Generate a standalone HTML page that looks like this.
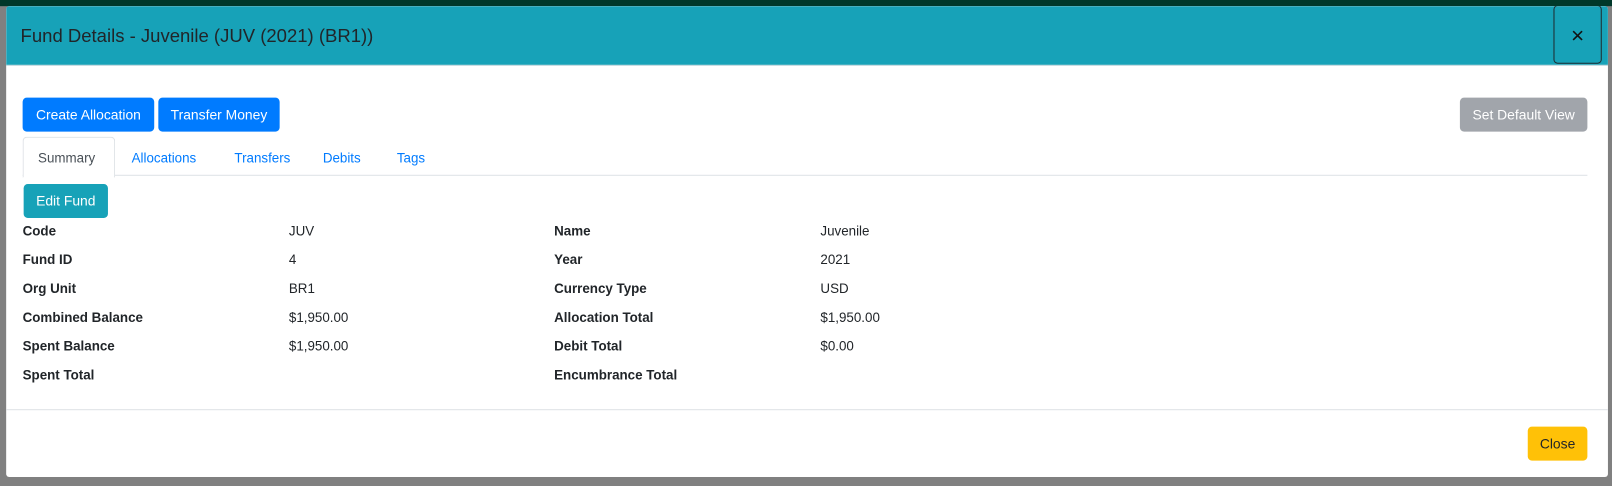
<!DOCTYPE html>
<html><head><style>
body{margin:0;width:1612px;height:486px;overflow:hidden;background:#808080;font-family:"Liberation Sans",sans-serif;position:relative}
.wrap{position:absolute;left:0;top:0;width:1568px;height:473px;transform:scale(1.0281);transform-origin:0 0}
.nav{position:absolute;left:0;top:0;width:1568px;height:6px;background:#00382a}
.modal{position:absolute;left:6px;top:6px;width:1558px;height:458px;background:#fff;border-radius:3px;overflow:hidden}
.hdr{position:absolute;left:0;top:0;width:1558px;height:57px;background:#17a2b8;border-bottom:1px solid #dee2e6}
.hdr h5{margin:0;position:absolute;left:14px;top:19px;font-size:18px;font-weight:normal;color:#212529}
.x{position:absolute;left:1505px;top:-1px;width:45px;height:55px;border:1.5px solid #1d2b30;border-radius:4px;font-size:22px;text-align:center;line-height:58px;color:#111}
.btn{position:absolute;height:33px;border-radius:4px;color:#fff;font-size:13.5px;line-height:33px;text-align:center}
.lbl{position:absolute;font-size:13px;font-weight:bold;color:#212529}
.val{position:absolute;font-size:13px;color:#212529}
.tab{position:absolute;top:140px;font-size:13px;color:#007bff}
</style></head><body>
<div class="wrap">
<div class="nav"></div>
<div class="modal">
<div class="hdr"><h5>Fund Details - Juvenile (JUV (2021) (BR1))</h5><div class="x">×</div></div>
<div class="btn" style="left:16px;top:89px;width:128px;background:#007bff">Create Allocation</div>
<div class="btn" style="left:148px;top:89px;width:118px;background:#007bff">Transfer Money</div>
<div class="btn" style="left:1414px;top:89px;width:124px;background:#a1a5ab">Set Default View</div>
<div style="position:absolute;left:16px;top:164px;width:1522px;border-top:1px solid #dee2e6"></div>
<div style="position:absolute;left:16px;top:127px;width:88px;height:38px;border:1px solid #dee2e6;border-bottom:1px solid #fff;border-radius:4px 4px 0 0;background:#fff"></div>
<div class="tab" style="left:31px;color:#495057">Summary</div>
<div class="tab" style="left:122px">Allocations</div>
<div class="tab" style="left:222px">Transfers</div>
<div class="tab" style="left:308px">Debits</div>
<div class="tab" style="left:380px">Tags</div>
<div class="btn" style="left:17px;top:173px;width:82px;background:#17a2b8">Edit Fund</div>
<div class="lbl" style="left:16px;top:211px">Code</div><div class="val" style="left:275px;top:211px">JUV</div>
<div class="lbl" style="left:533px;top:211px">Name</div><div class="val" style="left:792px;top:211px">Juvenile</div>
<div class="lbl" style="left:16px;top:239px">Fund ID</div><div class="val" style="left:275px;top:239px">4</div>
<div class="lbl" style="left:533px;top:239px">Year</div><div class="val" style="left:792px;top:239px">2021</div>
<div class="lbl" style="left:16px;top:267px">Org Unit</div><div class="val" style="left:275px;top:267px">BR1</div>
<div class="lbl" style="left:533px;top:267px">Currency Type</div><div class="val" style="left:792px;top:267px">USD</div>
<div class="lbl" style="left:16px;top:295px">Combined Balance</div><div class="val" style="left:275px;top:295px">$1,950.00</div>
<div class="lbl" style="left:533px;top:295px">Allocation Total</div><div class="val" style="left:792px;top:295px">$1,950.00</div>
<div class="lbl" style="left:16px;top:323px">Spent Balance</div><div class="val" style="left:275px;top:323px">$1,950.00</div>
<div class="lbl" style="left:533px;top:323px">Debit Total</div><div class="val" style="left:792px;top:323px">$0.00</div>
<div class="lbl" style="left:16px;top:351px">Spent Total</div>
<div class="lbl" style="left:533px;top:351px">Encumbrance Total</div>
<div style="position:absolute;left:0;top:392px;width:1558px;border-top:1px solid #dee2e6"></div>
<div class="btn" style="left:1480px;top:409px;width:58px;background:#ffc107;color:#212529">Close</div>
</div>
</div>
</body></html>
